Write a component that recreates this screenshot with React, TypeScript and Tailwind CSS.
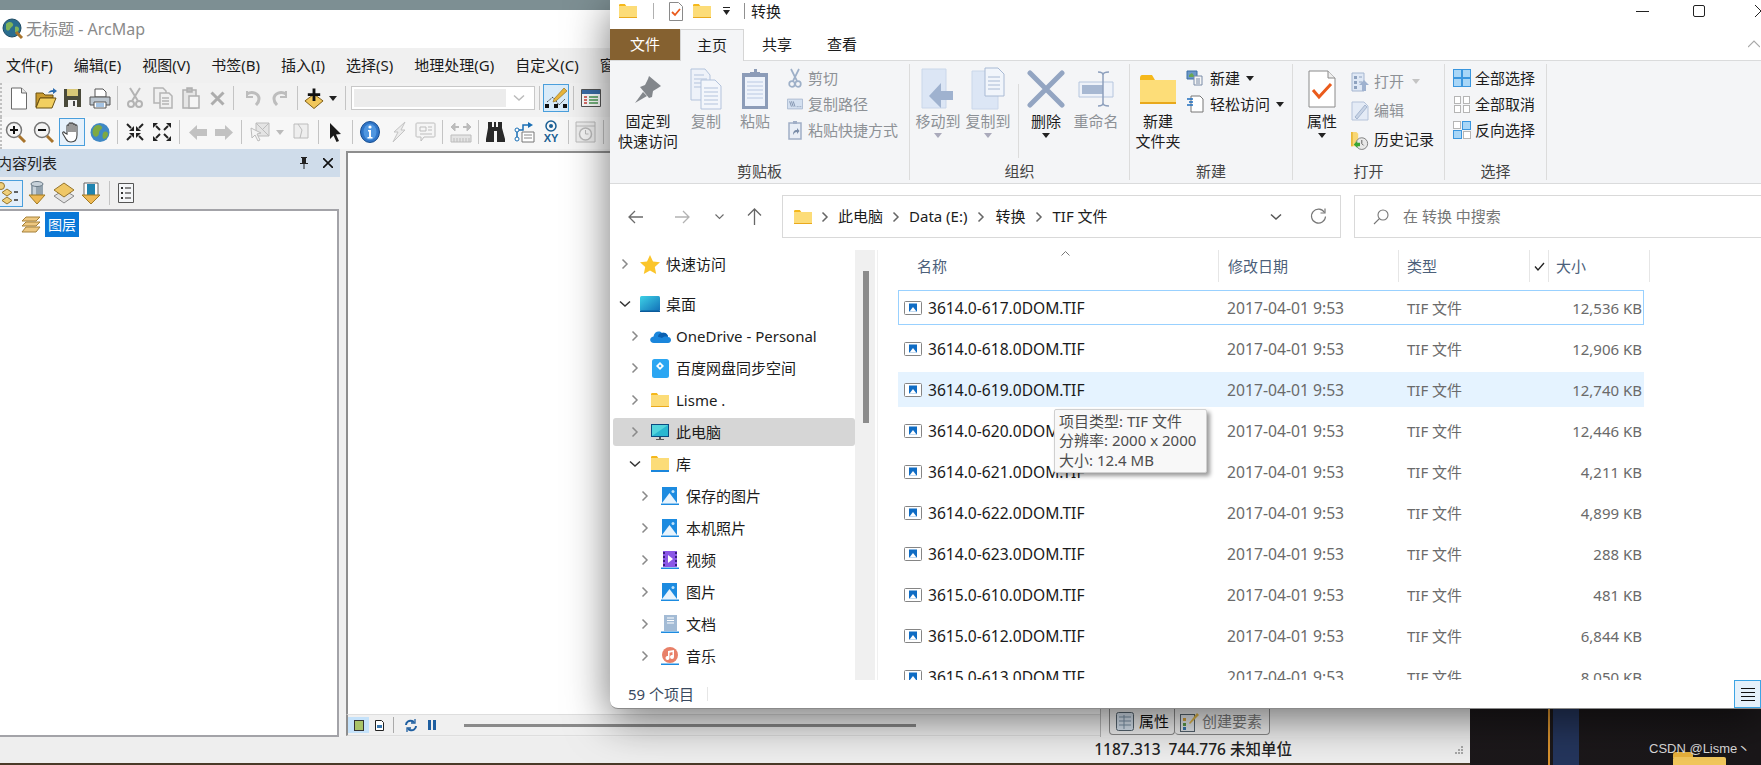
import React from "react";

type P = { className?: string };
type CellP = { w: string; children?: React.ReactNode };

const C = ({ w, children }: CellP) => (
  <div className={`${w} h-full shrink-0 flex items-center justify-center`}>{children}</div>
);
const TSep = () => <div className="w-px h-[24px] shrink-0 bg-[#c4c4c4]" />;

/* ---------- generic small glyphs ---------- */
const ChevR = ({ className = "stroke-[#8a8a8a]" }: P) => (
  <svg width="8" height="12" viewBox="0 0 8 12" fill="none" className={className} strokeWidth="1.5"><path d="M1.5 1.5 6 6l-4.500 4.500" /></svg>
);
const ChevD = ({ className = "stroke-[#444]" }: P) => (
  <svg width="12" height="8" viewBox="0 0 12 8" fill="none" className={className} strokeWidth="1.5"><path d="M1 1.500 6 6l5-4.500" /></svg>
);
const Caret = ({ className = "fill-[#222]" }: P) => (
  <svg width="8" height="5" viewBox="0 0 8 5" className={className}><path d="M0 0h8L4 5z" /></svg>
);

/* ---------- folders ---------- */
const Folder = ({ w = 18, h = 14 }: { w?: number; h?: number }) => (
  <svg width={w} height={h} viewBox="0 0 18 14">
    <path d="M0 1.500C0 .7.500 0 1.200 0h4.600l1.500 2H0z" fill="#f5b81c" />
    <path d="M0 2h18v11.200c0 .5-.3.8-.8.8H.8c-.5 0-.8-.3-.8-.8z" fill="#fcdc78" />
    <path d="M0 13h18v1H0z" fill="#eaa91c" />
  </svg>
);

/* ---------- arcmap toolbar icons ---------- */
const GlobeLens = () => (
  <svg width="22" height="22" viewBox="0 0 22 22">
    <circle cx="10" cy="10" r="9" fill="#2a6d8f" />
    <path d="M4 6c3-3 6-2 7 0s-2 3-3 5-3 2-4 0zM13 9c2-1 4 0 4 2s-2 4-4 3z" fill="#7fb35a" />
    <circle cx="10" cy="10" r="9" fill="none" stroke="#1d4a63" />
    <path d="M14 14l6 6" stroke="#a8742c" strokeWidth="3" />
  </svg>
);
const DocI = () => (
  <svg width="18" height="23" viewBox="0 0 18 23"><path d="M1.500 1h10l5 5v16h-15z" fill="#fff" stroke="#6a6a6a" /><path d="M11.500 1v5h5" fill="#e8e8e8" stroke="#6a6a6a" /></svg>
);
const OpenI = () => (
  <svg width="22" height="21" viewBox="0 0 22 21"><path d="M1 5h7l2 2h8v3H5L1 19z" fill="#c99a2e" stroke="#6a5010" /><path d="M1 20 5 10h16l-4 10z" fill="#f2cf60" stroke="#6a5010" /><path d="M13 5c1-2 3-3 5-3V0l4 3-4 3V4c-2 0-3 0-5 1z" fill="#2b6cb0" /></svg>
);
const SaveI = () => (
  <svg width="19" height="20" viewBox="0 0 19 20"><path d="M1 1h17v18H1z" fill="#4a4a3a" /><path d="M4 1h11v7H4z" fill="#d9c878" /><path d="M5 12h9v7H5z" fill="#f1f1f1" /><path d="M10 13h2v5h-2z" fill="#444" /></svg>
);
const PrintI = () => (
  <svg width="22" height="21" viewBox="0 0 22 21"><path d="M6 1h8l3 3v5H6z" fill="#fff" stroke="#555" /><path d="M1 9h20v8H1z" fill="#bcc6cf" stroke="#555" /><path d="M5 14h12v6H5z" fill="#fff" stroke="#555" /><path d="M7 16h8M7 18h8" stroke="#4a88c8" /></svg>
);
const CutG = () => (
  <svg width="18" height="22" viewBox="0 0 18 22" fill="none" stroke="#b4b4b4" strokeWidth="2"><path d="M4 1l8 13M14 1 6 14" /><circle cx="5" cy="17" r="3" /><circle cx="13" cy="17" r="3" /></svg>
);
const CopyG = () => (
  <svg width="20" height="22" viewBox="0 0 20 22" fill="#f0f0f0" stroke="#b4b4b4" strokeWidth="1.500"><path d="M1 1h9l3 3v12H1z" /><path d="M7 6h9l3 3v12H7z" /><path d="M9 11h7M9 14h7M9 17h7" /></svg>
);
const PasteG = () => (
  <svg width="18" height="22" viewBox="0 0 18 22" fill="#e6e6e6" stroke="#b0b0b0" strokeWidth="1.500"><path d="M1 3h13v18H1z" /><path d="M5 1h5v4H5z" fill="#bbb" /><path d="M7 9h10v12H7z" fill="#f5f5f5" /></svg>
);
const XG = () => (
  <svg width="15" height="15" viewBox="0 0 15 15" stroke="#adadad" strokeWidth="3"><path d="M1.500 1.500l12 12M13.500 1.500l-12 12" /></svg>
);
const UndoG = ({ flip }: { flip?: boolean }) => (
  <svg width="18" height="16" viewBox="0 0 18 16" fill="none" stroke="#bdbdbd" strokeWidth="3" className={flip ? "-scale-x-100" : ""}><path d="M3 4c5-3 12-1 12 5 0 2-1 4-3 6" /><path d="M3 1v6h6" strokeWidth="2" /></svg>
);
const AddI = () => (
  <svg width="21" height="23" viewBox="0 0 21 23"><path d="M10.500 7 20 14l-9.500 8L1 14z" fill="#f1c75b" stroke="#7a5a14" /><path d="M9 1h3v5h5v3h-5v5H9V9H4V6h5z" fill="#111" /></svg>
);
const EditorI = () => (
  <svg width="24" height="24" viewBox="0 0 24 24"><path d="M3 16 9 11l6 8 6-6" fill="none" stroke="#444" strokeDasharray="2 1" /><path d="M10 13 20 2l3 3-11 10-3 1z" fill="#e8b53c" stroke="#8a6412" strokeWidth=".6" /><g fill="#111"><rect x="1" y="18" width="4" height="4" /><rect x="10" y="18" width="4" height="4" /><rect x="19" y="18" width="4" height="4" /></g></svg>
);
const TableI = () => (
  <svg width="20" height="18" viewBox="0 0 20 18"><path d="M.5.500h19v17H.500z" fill="#fff" stroke="#555" /><path d="M1 1h18v4H1z" fill="#3b6ea8" /><path d="M3 8h3M3 11h3M3 14h3" stroke="#c9403a" strokeWidth="1.500" /><path d="M8 8h9M8 11h9M8 14h9" stroke="#4a9a54" strokeWidth="1.500" /></svg>
);
const ZoomI = ({ plus }: { plus?: boolean }) => (
  <svg width="22" height="23" viewBox="0 0 22 23"><circle cx="9" cy="9" r="7.500" fill="#f4f4f4" stroke="#777" strokeWidth="1.500" /><path d="M5 9h8" stroke="#111" strokeWidth="2" />{plus && <path d="M9 5v8" stroke="#111" strokeWidth="2" />}<path d="m14 15 6 6" stroke="#a8742c" strokeWidth="3" /></svg>
);
const HandI = () => (
  <svg width="20" height="23" viewBox="0 0 20 23" fill="#fff" stroke="#444" strokeWidth="1.100"><path d="M5 13V5c0-1.500 2-1.500 2 0V3c0-1.500 2-1.500 2 0v0c0-1.500 2-1.500 2 0v1c0-1.500 2-1.500 2 0v1c0-1.500 2-1.500 2 0v9c0 4-2 7-6 7-3 0-4-1-5-3l-3-5c-1-2 1-3 2-1z" /><path d="M7 5v6M9 3v8M11 4v7M13 5v6" /></svg>
);
const EarthI = () => (
  <svg width="20" height="21" viewBox="0 0 20 21"><circle cx="10" cy="10.500" r="9.500" fill="#3f88c5" /><path d="M5 4c3-2 6-1 7 1s-3 3-3 6-3 5-5 3-2-7 1-10zM14 10c2-1 4 0 4 2s-2 5-4 5-2-6 0-7z" fill="#7ea942" /></svg>
);
const ArrowsIn = () => (
  <svg width="18" height="18" viewBox="0 0 18 18" fill="#222" stroke="#222">
    <g><path d="M8 8H3l5-5z" stroke="none" /><path d="M1 1l4 4" strokeWidth="2" /></g>
    <g transform="translate(18 0) scale(-1 1)"><path d="M8 8H3l5-5z" stroke="none" /><path d="M1 1l4 4" strokeWidth="2" /></g>
    <g transform="translate(0 18) scale(1 -1)"><path d="M8 8H3l5-5z" stroke="none" /><path d="M1 1l4 4" strokeWidth="2" /></g>
    <g transform="translate(18 18) scale(-1 -1)"><path d="M8 8H3l5-5z" stroke="none" /><path d="M1 1l4 4" strokeWidth="2" /></g>
  </svg>
);
const ArrowsOut = () => (
  <svg width="18" height="18" viewBox="0 0 18 18" fill="#222" stroke="#222">
    <g><path d="M0 0h5L0 5z" stroke="none" /><path d="M3 3l4 4" strokeWidth="2" /></g>
    <g transform="translate(18 0) scale(-1 1)"><path d="M0 0h5L0 5z" stroke="none" /><path d="M3 3l4 4" strokeWidth="2" /></g>
    <g transform="translate(0 18) scale(1 -1)"><path d="M0 0h5L0 5z" stroke="none" /><path d="M3 3l4 4" strokeWidth="2" /></g>
    <g transform="translate(18 18) scale(-1 -1)"><path d="M0 0h5L0 5z" stroke="none" /><path d="M3 3l4 4" strokeWidth="2" /></g>
  </svg>
);
const BackG = ({ flip }: { flip?: boolean }) => (
  <svg width="18" height="15" viewBox="0 0 18 15" fill="#c2c2c2" className={flip ? "-scale-x-100" : ""}><path d="M8 0v4h10v7H8v4L0 7.500z" /></svg>
);
const SelG = () => (
  <svg width="20" height="20" viewBox="0 0 20 20" fill="#e4e4e4" stroke="#bcbcbc"><path d="M6 1h13v13H6z" /><path d="M6 1l13 13M19 1 12 8" fill="none" /><path d="M1 6l10 5-4 1 3 6-2 1-3-6-3 3z" fill="#f4f4f4" /></svg>
);
const ClearG = () => (
  <svg width="16" height="18" viewBox="0 0 16 18" fill="#eee" stroke="#bcbcbc"><path d="M1 1h14v14H1z" /><path d="M5 1l4 6-2 8" fill="none" /></svg>
);
const Pointer = () => (
  <svg width="13" height="19" viewBox="0 0 13 19" fill="#1a1a1a"><path d="M1 0l11 11-5 .5 3 6.500-2.500 1-3-6.500L1 16z" /></svg>
);
const InfoI = () => (
  <svg width="20" height="22" viewBox="0 0 20 22"><ellipse cx="10" cy="11" rx="9.500" ry="10.500" fill="#2f75c8" stroke="#174d8f" /><ellipse cx="10" cy="11" rx="6.500" ry="8" fill="#4f96e0" /><circle cx="10" cy="6" r="1.600" fill="#fff" /><path d="M8 9h3v7h1.500v1.500h-5V16H9v-5.500H8z" fill="#fff" /></svg>
);
const FlashG = () => (
  <svg width="16" height="22" viewBox="0 0 16 22" fill="#ebebeb" stroke="#c4c4c4"><path d="M14 1 3 11h4L2 21l12-12h-4z" /></svg>
);
const HtmlG = () => (
  <svg width="21" height="20" viewBox="0 0 21 20" fill="#f5f5f5" stroke="#bdbdbd"><path d="M2 1h17c1 0 1 1 1 1v12s0 1-1 1H9l-3 4v-4H2c-1 0-1-1-1-1V2s0-1 1-1z" /><path d="M5 5h6v4H5zM13 5h4M13 8h4M5 12h12" /></svg>
);
const MeasG = () => (
  <svg width="22" height="22" viewBox="0 0 22 22" fill="none" stroke="#bcbcbc"><path d="M1 14h20v7H1z" fill="#e4e4e4" /><path d="M4 17v4M7 17v4M10 17v4M13 17v4M16 17v4M19 17v4" /><path d="M1 6h8M21 6h-8" strokeWidth="2" /><path d="M1 6l4-4v8zM21 6l-4-4v8z" fill="#bcbcbc" /></svg>
);
const Binoc = () => (
  <svg width="20" height="22" viewBox="0 0 20 22" fill="#2a2a2a"><path d="M3 1h4v5h2V1h2v5h2V1h4v6l3 11v3h-8V10H9v11H1v-3L3 7z" /></svg>
);
const RouteI = () => (
  <svg width="21" height="22" viewBox="0 0 21 22" fill="none"><path d="M3 17V9h6V4h5" stroke="#1a6fb5" strokeWidth="1.500" /><path d="M14 1l5 3-5 3z" fill="#1a6fb5" /><path d="M8 11h12v10H8z" fill="#fff" stroke="#777" /><path d="M10 14h8M10 17h8" stroke="#888" /><circle cx="3" cy="9" r="2" fill="#fff" stroke="#1a6fb5" /><circle cx="3" cy="18" r="2" fill="#fff" stroke="#1a6fb5" /></svg>
);
const XYI = () => (
  <div className="flex flex-col items-center leading-none">
    <svg width="12" height="12" viewBox="0 0 12 12" fill="none"><circle cx="6" cy="6" r="5" stroke="#1a5f94" strokeWidth="1.500" /><circle cx="6" cy="6" r="2" fill="#1a5f94" /></svg>
    <span className="text-[11px] font-bold text-[#1a5f94] font-['Liberation_Sans',sans-serif] mt-px">XY</span>
  </div>
);
const TimeG = () => (
  <svg width="21" height="22" viewBox="0 0 21 22" fill="none" stroke="#bcbcbc"><path d="M1 1h19v20H1z" fill="#efefef" /><path d="M1 5h19" /><circle cx="10.500" cy="13" r="6" fill="#f8f8f8" strokeWidth="1.500" /><path d="M10.500 9v4h3" /></svg>
);
const TreeI = () => (
  <svg width="22" height="24" viewBox="0 0 22 24"><circle cx="4" cy="5" r="3.500" fill="#efd07c" stroke="#96752c" /><path d="M10 8l5 3.500-5 3.500-5-3.500z" fill="#efd07c" stroke="#96752c" /><path d="M10 16l5 3.500-5 3.500-5-3.500z" fill="#efd07c" stroke="#96752c" /><path d="M17 11h4M17 19h4" stroke="#333" strokeWidth="1.500" /></svg>
);
const DbI = () => (
  <svg width="18" height="24" viewBox="0 0 18 24"><path d="M3 3h12v12H3z" fill="#94a3ae" /><path d="M5 4h3v11H5z" fill="#c8d2da" /><ellipse cx="9" cy="3" rx="6" ry="2.500" fill="#c8d2da" stroke="#6a7a86" /><path d="M1 14h16l-8 9z" fill="#eeb955" stroke="#a07a22" /></svg>
);
const StackI = () => (
  <svg width="22" height="24" viewBox="0 0 22 24"><path d="M11 9l10 6-10 7-10-7z" fill="#e2e2e2" stroke="#888" /><path d="M11 2l10 7-10 7L1 9z" fill="#efc766" stroke="#96752c" /></svg>
);
const SelStack = () => (
  <svg width="20" height="24" viewBox="0 0 20 24"><path d="M3 2h14v13H3z" fill="#fff" stroke="#666" /><path d="M6 3h8v11H6z" fill="#1f84b0" /><path d="M1 14h18l-9 9z" fill="#eeb955" stroke="#a07a22" /></svg>
);
const OptsI = () => (
  <svg width="16" height="20" viewBox="0 0 16 20"><path d="M.5.500h15v19H.500z" fill="#f4f6f8" stroke="#555" /><path d="M3 5h2M3 10h2M3 15h2" stroke="#333" strokeWidth="2" /><path d="M7 5h6M7 10h6M7 15h6" stroke="#666" strokeWidth="1.500" /></svg>
);
const Layers = () => (
  <svg width="20" height="18" viewBox="0 0 20 18" fill="#eec881" stroke="#a5813a"><path d="M5 1h14l-4 4H1zM5 6h14l-4 4H1zM5 11h14l-4 5H1z" /></svg>
);

/* ---------- ribbon icons ---------- */
const PinBig = () => (
  <svg width="28" height="32" viewBox="0 0 28 32"><path d="M15 3l12 10-3 2-5 3-1 6-3 1-9-11 5-2 3-6z" fill="#83878c" /><path d="M9 19 1 30l12-7z" fill="#83878c" /></svg>
);
const CopyBig = () => (
  <svg width="32" height="42" viewBox="0 0 32 42" fill="#eef2f9" stroke="#b3c3dc"><path d="M1 1h14l5 6v25H1z" /><path d="M4 7h10M4 11h13M4 15h13M4 19h13" /><path d="M11 12h14l6 6v23H11z" fill="#f3f6fb" /><path d="M14 20h14M14 24h14M14 28h14M14 32h14M14 36h14" /></svg>
);
const PasteBig = () => (
  <svg width="28" height="42" viewBox="0 0 28 42"><path d="M1 5h26v36H1z" fill="#8c9cb8" /><path d="M4 9h20v29H4z" fill="#eef3fb" /><path d="M6 14h16M6 18h16M6 22h16M6 26h16M6 30h16" stroke="#b9c8e2" /><path d="M9 4h4V1h3v3h3v5H9z" fill="#8c9cb8" /></svg>
);
const CutSm = () => (
  <svg width="14" height="20" viewBox="0 0 14 20" fill="none" stroke="#9eb0c8" strokeWidth="1.700"><path d="M3 1l6 12M11 1 5 13" /><circle cx="4" cy="16" r="2.800" /><circle cx="10" cy="16" r="2.800" /></svg>
);
const PathSm = () => (
  <svg width="18" height="12" viewBox="0 0 18 12"><path d="M.5.500h17v11H.500z" fill="#d4e0f0" stroke="#a8b8d0" /><path d="M3 3l2 6M5 3l2 6M7 3l2 6" stroke="#7a8ca8" /><path d="M11 9h1M13 9h1M15 9h1" stroke="#7a8ca8" /></svg>
);
const ShortSm = () => (
  <svg width="14" height="20" viewBox="0 0 14 20"><path d="M1 3h12v16H1z" fill="#e9eef6" stroke="#a0aec6" strokeWidth="1.500" /><path d="M5 1h4v3H5z" fill="#a0aec6" /><path d="M5 15c0-3 1-5 4-5V8l2.500 3L9 14v-2c-2 0-3 1-4 3z" fill="#7a8ca8" /></svg>
);
const MoveBig = () => (
  <svg width="34" height="42" viewBox="0 0 34 42"><path d="M1 1h24v39H1z" fill="#dce6f5" stroke="#cad7ea" /><path d="M32 23H20v-8L8 28l12 12v-8h12z" fill="#9fb2cf" /></svg>
);
const CopyTo = () => (
  <svg width="34" height="44" viewBox="0 0 34 44"><path d="M1 4h26v38H1z" fill="#dce6f5" stroke="#cad7ea" /><path d="M14 1h13l6 6v22H14z" fill="#f1f5fb" stroke="#a9bad4" /><path d="M17 10h12M17 14h12M17 18h12M17 22h12" stroke="#a9bad4" /></svg>
);
const XBig = () => (
  <svg width="38" height="38" viewBox="0 0 38 38" stroke="#93a5c2" strokeWidth="5" strokeLinecap="round"><path d="M3 3l32 32M35 3 3 35" /></svg>
);
const Rename = () => (
  <svg width="36" height="36" viewBox="0 0 36 36"><path d="M1 11h34v15H1z" fill="#eef2f9" stroke="#b6c6de" /><path d="M4 14h21v9H4z" fill="#a7b8d2" /><path d="M20 1c3 0 5 1 5 3v28c0 2-2 3-5 3M31 1c-3 0-6 1-6 3M31 35c-3 0-6-1-6-3" fill="none" stroke="#8ea0bd" strokeWidth="1.500" /></svg>
);
const FolderBig = () => (
  <svg width="36" height="29" viewBox="0 0 36 29"><path d="M0 3c0-2 1-3 2-3h10l3 5H0z" fill="#f5b81c" /><path d="M0 5h36v22c0 1-1 2-2 2H2c-1 0-2-1-2-2z" fill="#fddd78" /><path d="M0 27h36v2H0z" fill="#e8a81c" /></svg>
);
const NewItem = () => (
  <svg width="18" height="16" viewBox="0 0 18 16"><path d="M1 1h10v8H1z" fill="#6c98c8" stroke="#3a6fa5" /><path d="M3 5l3-2 3 4H3z" fill="#6aa84f" /><path d="M8 6h8v9H8z" fill="#f5f5f5" stroke="#7a8ca8" /><path d="M10 9h4M10 11h4M10 13h4" stroke="#7a8ca8" /></svg>
);
const EasyAcc = () => (
  <svg width="18" height="18" viewBox="0 0 18 18"><path d="M5 1h9l3 3v13H5z" fill="#fff" stroke="#777" /><path d="M1 4h6M3 7h4M1 10h6" stroke="#1f6fc0" strokeWidth="1.300" /></svg>
);
const PropBig = () => (
  <svg width="28" height="38" viewBox="0 0 28 38"><path d="M1 1h19l7 7v29H1z" fill="#fff" stroke="#8a8a8a" /><path d="M20 1v7h7" fill="#eee" stroke="#8a8a8a" /><path d="M5 20l6 7 12-13" fill="none" stroke="#ea5b1c" strokeWidth="3" /></svg>
);
const OpenSm = () => (
  <svg width="18" height="20" viewBox="0 0 18 20"><path d="M1 1h12v18H1z" fill="#dfe8f5" stroke="#a5b6d0" /><path d="M3 4h3v3H3zM3 9h3v3H3zM3 14h3v3H3z" fill="#8ea2bf" /><path d="M8 5h3M8 10h3" stroke="#8ea2bf" /><path d="M13 8l5 5h-3v6h-4v-6H8z" fill="#9fb2cf" /></svg>
);
const EditSm = () => (
  <svg width="18" height="20" viewBox="0 0 18 20"><path d="M1 1h12l4 4v14H1z" fill="#e4ebf6" stroke="#b5c3da" /><path d="M4 16 14 4l2 2L6 18z" fill="#c8d4e6" stroke="#a5b6d0" /></svg>
);
const HistSm = () => (
  <svg width="20" height="22" viewBox="0 0 20 22"><path d="M0 2h6l2 2v14H0z" fill="#f8d775" /><path d="M0 2h2v16H0z" fill="#e9b93a" /><circle cx="12" cy="15" r="6.500" fill="#e8e8e8" stroke="#777" /><path d="M12 11v4l2 2" stroke="#555" fill="none" /><path d="M3 16l4-4v2h3v4H7v2z" fill="#3aa635" /></svg>
);
const SelAll = () => (
  <svg width="18" height="18" viewBox="0 0 18 18" fill="#a8d6f7" stroke="#3a96de"><rect x=".5" y=".5" width="8" height="8" /><rect x="9.500" y=".5" width="8" height="8" /><rect x=".5" y="9.500" width="8" height="8" /><rect x="9.500" y="9.500" width="8" height="8" /></svg>
);
const SelNone = () => (
  <svg width="16" height="17" viewBox="0 0 16 17" fill="#fff" stroke="#b5b5b5"><rect x=".5" y=".5" width="6" height="7" /><rect x="9.500" y=".5" width="6" height="7" /><rect x=".5" y="9.500" width="6" height="7" /><rect x="9.500" y="9.500" width="6" height="7" /></svg>
);
const SelInv = () => (
  <svg width="18" height="18" viewBox="0 0 18 18"><rect x=".5" y=".5" width="7" height="7" fill="#fff" stroke="#b5b5b5" /><rect x="9.500" y=".5" width="8" height="8" fill="#a8d6f7" stroke="#3a96de" /><rect x=".5" y="9.500" width="8" height="8" fill="#a8d6f7" stroke="#3a96de" /><rect x="10.500" y="10.500" width="7" height="7" fill="#fff" stroke="#b5b5b5" /></svg>
);

/* ---------- sidebar icons ---------- */
const Star = () => (
  <svg width="20" height="19" viewBox="0 0 20 19" fill="#fbc52b"><path d="M10 0l3 6.500 7 .8-5.200 4.700L16.200 19 10 15.500 3.800 19l1.400-7L0 7.300l7-.8z" /></svg>
);
const Desk = () => (
  <svg width="20" height="16" viewBox="0 0 20 16"><defs><linearGradient id="dg" x1="0" y1="0" x2="1" y2="1"><stop offset="0" stopColor="#3ed2e6" /><stop offset="1" stopColor="#1270b8" /></linearGradient></defs><rect width="20" height="15" rx="1.500" fill="url(#dg)" /><rect y="14.500" width="20" height="1.500" fill="#0a5a9a" /></svg>
);
const Cloud = () => (
  <svg width="21" height="14" viewBox="0 0 21 14"><path d="M4 14c-5 0-5-6-.5-6.500C4 3 9 1 12 4c3-1 6 1 6 4 4 0 4 6 0 6z" fill="#1a86dc" /><path d="M12 4c3-1 6 1 6 4-3-1-5 0-6 1-2-1-3-1-4-1 0-3 2-4 4-4z" fill="#0a5fb0" /></svg>
);
const Baidu = () => (
  <svg width="17" height="19" viewBox="0 0 17 19"><rect width="17" height="19" rx="2.500" fill="#2ba6f2" /><path d="M8 3l4 4-4 4-4-4zM8 5.500 6.500 7 8 8.500 9.500 7z" fill="#fff" fillRule="evenodd" /></svg>
);
const Monitor = () => (
  <svg width="18" height="16" viewBox="0 0 18 16"><rect x=".5" y=".5" width="17" height="12" fill="#2ab7d0" stroke="#0b4a80" /><path d="M1 1h16L1 12z" fill="#52d4dc" /><path d="M8 13h2v2H8z" fill="#555" /><path d="M5 15h8v1H5z" fill="#555" /></svg>
);
const LibF = () => (
  <svg width="18" height="16" viewBox="0 0 18 16"><path d="M0 1.500C0 .7.500 0 1.200 0h4.600l1.500 2H0z" fill="#f5b81c" /><path d="M0 2h18v12H0z" fill="#fcdc78" /><path d="M0 14h18v2H0z" fill="#1a86dc" /></svg>
);
const Pic = () => (
  <svg width="18" height="18" viewBox="0 0 18 18"><path d="M1 0h15v16H1z" fill="#1c8be0" /><path d="M1 16 8.500 6 16 16z" fill="#e8f4fd" /><path d="M0 16.500h18V18H0z" fill="#1c8be0" /><circle cx="12" cy="4.500" r="1.500" fill="#bfe3fb" /></svg>
);
const Vid = () => (
  <svg width="18" height="18" viewBox="0 0 18 18"><path d="M2 0h14v16H2z" fill="#8a57e6" /><path d="M2 1h2v2H2zM2 5h2v2H2zM2 9h2v2H2zM2 13h2v2H2zM14 1h2v2h-2zM14 5h2v2h-2zM14 9h2v2h-2zM14 13h2v2h-2z" fill="#3a1f80" /><path d="M7 4l5 4-5 4z" fill="#fff" /><path d="M0 16.500h18V18H0z" fill="#1c8be0" /></svg>
);
const DocBlue = () => (
  <svg width="18" height="18" viewBox="0 0 18 18"><path d="M3 0h13v16H3z" fill="#a3bbd5" /><path d="M6 3h7M6 5.500h7M6 8h7" stroke="#fff" /><path d="M0 16.500h18V18H0z" fill="#1c8be0" /></svg>
);
const Music = () => (
  <svg width="18" height="18" viewBox="0 0 18 18"><circle cx="9" cy="8" r="8" fill="#e88068" /><path d="M7 4l6-1v7a2 2 0 1 1-1.500-2V5L8.500 5.700V11a2 2 0 1 1-1.500-2z" fill="#fff" /><path d="M0 16.500h18V18H0z" fill="#1c8be0" /></svg>
);
const Tif = () => (
  <svg width="18" height="14" viewBox="0 0 18 14"><rect x=".5" y=".5" width="17" height="13" rx="1" fill="#fff" stroke="#858585" /><rect x="5" y="2.500" width="8" height="8" fill="#0f6cc4" /><path d="M5.500 10.500 9 6l3.500 4.500z" fill="#fff" /></svg>
);

/* ---------- ribbon parts ---------- */
const RGroup = ({ w, label, children }: { w: string; label: string; children: React.ReactNode }) => (
  <div className={`${w} shrink-0 my-[3px] flex flex-col border-r border-[#dcdcdc]`}>
    <div className="h-[99px] flex pt-px">{children}</div>
    <div className="flex-1 flex items-center justify-center text-[15px] leading-none text-[#444]">{label}</div>
  </div>
);
const Big = ({ w, icon, lines, muted, arrow }: { w: string; icon: React.ReactNode; lines: string[]; muted?: boolean; arrow?: string }) => (
  <div className={`${w} shrink-0 flex flex-col items-center ${muted ? "text-[#8d9196]" : "text-[#1c1c1c]"}`}>
    <div className="h-[46px] pt-[2px] box-border flex items-center justify-center">{icon}</div>
    {lines.map((l) => (
      <div key={l} className="h-[20px] leading-[20px] text-[15px] whitespace-nowrap">{l}</div>
    ))}
    {arrow && <Caret className={`${arrow} mt-[2px]`} />}
  </div>
);
const Small = ({ icon, label, muted, after, cell, row, gap }: { icon: React.ReactNode; label: string; muted?: boolean; after?: React.ReactNode; cell: string; row: string; gap: string }) => (
  <div className={`${row} flex items-center whitespace-nowrap text-[15px] leading-none ${muted ? "text-[#8d9196]" : "text-[#1c1c1c]"}`}>
    <div className={`${cell} ${gap} flex items-center justify-center shrink-0`}>{icon}</div>
    {label}
    {after}
  </div>
);

/* ---------- sidebar ---------- */
const NavRow = ({ lv, icon, label, open, active, top, noChev }: { lv: string; icon: React.ReactNode; label: string; open?: boolean; active?: boolean; top?: string; noChev?: boolean }) => (
  <div className={`${lv} ${top ?? ""} ${active ? "bg-[#d6d6d6]" : ""} h-[28px] shrink-0 rounded-[3px] flex items-center text-[15px] text-[#1c1c1c] whitespace-nowrap`}>
    <div className="w-[20px] flex justify-center shrink-0">{noChev ? null : open ? <ChevD className="stroke-[#333]" /> : <ChevR />}</div>
    <div className="w-[30px] flex justify-center shrink-0">{icon}</div>
    <span className="ml-px">{label}</span>
  </div>
);

const files: [string, string][] = [
  ["3614.0-617.0DOM.TIF", "12,536 KB"],
  ["3614.0-618.0DOM.TIF", "12,906 KB"],
  ["3614.0-619.0DOM.TIF", "12,740 KB"],
  ["3614.0-620.0DOM.TIF", "12,446 KB"],
  ["3614.0-621.0DOM.TIF", "4,211 KB"],
  ["3614.0-622.0DOM.TIF", "4,899 KB"],
  ["3614.0-623.0DOM.TIF", "288 KB"],
  ["3615.0-610.0DOM.TIF", "481 KB"],
  ["3615.0-612.0DOM.TIF", "6,844 KB"],
  ["3615.0-613.0DOM.TIF", "8,050 KB"],
];

const menu = ["文件(F)", "编辑(E)", "视图(V)", "书签(B)", "插入(I)", "选择(S)", "地理处理(G)", "自定义(C)", "窗口(W)"];

const ArcMap = () => (
  <div className="w-[1470px] h-[753px] flex flex-col bg-[#f0f0f0] overflow-hidden">
    <div className="h-[38px] shrink-0 bg-white flex items-center pl-[2px] text-[16px] text-[#8a8a8a]">
      <GlobeLens />
      <span className="ml-[2px]">无标题 - ArcMap</span>
    </div>
    <div className="h-[35px] shrink-0 bg-[#f0f0f0] flex items-center pl-[6px] pb-px gap-[21px] text-[15px] text-[#1a1a1a] whitespace-nowrap">
      {menu.map((m) => <span key={m}>{m}</span>)}
    </div>
    <div className="h-[34px] shrink-0 bg-[#f2f2f2] flex items-center pl-[3px] pb-[4px] border-l-2 border-dotted border-[#c0c0c0]">
      <C w="w-[27px]"><DocI /></C><C w="w-[27px]"><OpenI /></C><C w="w-[27px]"><SaveI /></C><C w="w-[27px]"><PrintI /></C>
      <C w="w-[8px]"><TSep /></C>
      <C w="w-[28px]"><CutG /></C><C w="w-[28px]"><CopyG /></C><C w="w-[27px]"><PasteG /></C><C w="w-[26px]"><XG /></C>
      <C w="w-[6px]"><TSep /></C>
      <C w="w-[34px]"><UndoG /></C><C w="w-[20px]"><UndoG flip /></C>
      <C w="w-[14px]"><TSep /></C>
      <C w="w-[20px]"><AddI /></C><C w="w-[18px]"><Caret /></C>
      <C w="w-[6px]"><TSep /></C>
      <div className="ml-[3px] w-[184px] h-[24px] shrink-0 border border-[#c8c8c8] bg-white p-[2px] flex items-center">
        <div className="flex-1 h-full bg-[#ececec]" />
        <div className="w-[26px] flex justify-center"><ChevD className="stroke-[#bbb]" /></div>
      </div>
      <C w="w-[8px]"><TSep /></C>
      <div className="w-[26px] h-[28px] shrink-0 border border-[#4a9fdc] bg-[#d9ebf9] flex items-center justify-center"><EditorI /></div>
      <C w="w-[8px]"><TSep /></C>
      <C w="w-[28px]"><TableI /></C>
    </div>
    <div className="h-[32px] shrink-0 bg-[#f7f7f7] flex items-center pl-[1px] pb-[2px] border-l-2 border-dotted border-[#c0c0c0]">
      <C w="w-[26px]"><ZoomI plus /></C><C w="w-[30px]"><ZoomI /></C>
      <div className="w-[26px] h-[28px] shrink-0 border border-[#4a9fdc] bg-[#e6f1fb] flex items-center justify-center"><HandI /></div>
      <C w="w-[30px]"><EarthI /></C>
      <C w="w-[4px]"><TSep /></C>
      <C w="w-[32px]"><ArrowsIn /></C><C w="w-[22px]"><ArrowsOut /></C>
      <C w="w-[12px]"><TSep /></C>
      <C w="w-[26px]"><BackG /></C><C w="w-[26px]"><BackG flip /></C>
      <C w="w-[8px]"><TSep /></C>
      <C w="w-[30px]"><SelG /></C><C w="w-[10px]"><Caret className="fill-[#bbb]" /></C><C w="w-[32px]"><ClearG /></C>
      <C w="w-[2px]"><TSep /></C>
      <C w="w-[32px]"><Pointer /></C>
      <C w="w-[2px]"><TSep /></C>
      <C w="w-[34px]"><InfoI /></C><C w="w-[24px]"><FlashG /></C><C w="w-[28px]"><HtmlG /></C>
      <C w="w-[6px]"><TSep /></C>
      <C w="w-[32px]"><MeasG /></C>
      <C w="w-[2px]"><TSep /></C>
      <C w="w-[32px]"><Binoc /></C><C w="w-[26px]"><RouteI /></C><C w="w-[28px]"><XYI /></C>
      <C w="w-[6px]"><TSep /></C>
      <C w="w-[28px]"><TimeG /></C>
      <C w="w-[8px]"><TSep /></C>
    </div>
    <div className="flex-1 flex min-h-0">
      <div className="w-[346px] shrink-0 flex flex-col">
        <div className="w-[340px] h-[28px] shrink-0 bg-[#cfdcea] flex items-center text-[15px] text-[#222] overflow-hidden">
          <span className="-ml-[3px] flex-1">内容列表</span>
          <svg width="10" height="12" viewBox="0 0 10 12" className="mr-[14px]" fill="#222"><path d="M2 0h6v1H7v5h2v1H5.500v5h-1V7H1V6h2V1H2z" /></svg>
          <svg width="10" height="10" viewBox="0 0 10 10" className="mr-[7px]" stroke="#111" strokeWidth="1.600"><path d="M0 0l10 10M10 0 0 10" /></svg>
        </div>
        <div className="w-[340px] h-[32px] shrink-0 flex items-center">
          <div className="w-[23px] h-[27px] shrink-0 border border-[#4a9fdc] border-l-0 bg-[#e2eefa] flex items-center justify-start overflow-hidden"><div className="-ml-[3px] flex"><TreeI /></div></div>
          <C w="w-[28px]"><DbI /></C><C w="w-[26px]"><StackI /></C><C w="w-[28px]"><SelStack /></C>
          <C w="w-[8px]"><TSep /></C>
          <C w="w-[26px]"><OptsI /></C>
        </div>
        <div className="w-[339px] flex-1 bg-white border-t-2 border-r-2 border-b-2 border-[#a3a3a8] pl-[21px] pt-[1px]">
          <div className="flex items-center h-[25px]">
            <Layers />
            <span className="ml-[4px] h-[25px] w-[34px] bg-[#0a78d7] text-white text-[14px] leading-[25px] text-center">图层</span>
          </div>
        </div>
      </div>
      <div className="w-[754px] shrink-0 flex flex-col pt-[2px]">
        <div className="h-[563px] shrink-0 bg-white border-l-2 border-t-2 border-[#8e8e8e]" />
        <div className="h-[22px] shrink-0 bg-[#f0f0f0] border-t border-b border-[#dedede] border-l-2 border-l-[#8e8e8e] flex items-center">
          <div className="w-[21px] h-[16px] bg-[#c5e2fa] flex items-center justify-center">
            <svg width="10" height="11" viewBox="0 0 10 11"><rect width="10" height="11" fill="#333" /><rect x="1" y="1" width="8" height="9" fill="#a9c468" /></svg>
          </div>
          <C w="w-[21px]"><svg width="9" height="11" viewBox="0 0 9 11"><path d="M.5.500h6l2 2v8h-8z" fill="#fff" stroke="#222" /><rect x="2" y="5" width="5" height="3" fill="#3a78b0" /></svg></C>
          <C w="w-[7px]"><div className="w-px h-[16px] bg-[#aaa]" /></C>
          <C w="w-[27px]"><svg width="12" height="13" viewBox="0 0 12 13" fill="none" stroke="#1f5fa0" strokeWidth="2"><path d="M1 6c0-3 3-5 6-4l2 1M11 7c0 3-3 5-6 4l-2-1" /><path d="M10 0v4H6M2 13V9h4" strokeWidth="1.300" /></svg></C>
          <C w="w-[15px]"><svg width="8" height="10" viewBox="0 0 8 10" fill="#1f5fa0"><rect width="3" height="10" /><rect x="5" width="3" height="10" /></svg></C>
          <div className="ml-[25px] w-[452px] h-[3px] bg-[#8a8a8a]" />
        </div>
      </div>
      <div className="flex-1 border-l border-[#b5b5b5] flex flex-col justify-end pb-[2px] pl-[8px]">
        <div className="h-[26px] flex text-[15px]">
          <div className="w-[66px] border border-t-0 border-[#8c8c8c] rounded-b-[4px] flex items-center pl-[6px] gap-[5px] text-[#111]">
            <svg width="18" height="19" viewBox="0 0 18 19"><rect x=".5" y=".5" width="17" height="18" rx="2" fill="#d8e4f0" stroke="#56646f" /><path d="M3 5h12M3 9h12M3 13h12M8 3v14" stroke="#7d93a8" /></svg>
            属性
          </div>
          <div className="w-[95px] border border-l-0 border-t-0 border-[#8c8c8c] rounded-b-[4px] flex items-center pl-[5px] gap-[3px] text-[#7a7a7a] whitespace-nowrap">
            <svg width="19" height="20" viewBox="0 0 19 20"><rect x=".5" y="2.500" width="14" height="17" fill="#e6eaee" stroke="#56646f" /><path d="M3 6h3v3H3z" fill="#d9a13a" /><path d="M3 11h3v3H3z" fill="#5a9a4a" /><path d="M3 15h3v3H3z" fill="#3a78b0" /><path d="M9 11 17 1l2 2-9 9z" fill="#e2b84a" /></svg>
            创建要素
          </div>
        </div>
      </div>
    </div>
    <div className="h-[26px] shrink-0 bg-[#eeeeee] flex items-center justify-end pr-[6px] text-[15.500px] font-medium text-[#222] whitespace-nowrap">
      <span className="mr-[162px]">1187.313&nbsp;&nbsp;744.776 未知单位</span>
      <svg width="10" height="10" viewBox="0 0 10 10" fill="#a8a8a8"><path d="M7 1h2v2H7zM4 4h2v2H4zM7 4h2v2H7zM1 7h2v2H1zM4 7h2v2H4zM7 7h2v2H7z" /></svg>
    </div>
  </div>
);

const Explorer = () => (
  <div className="absolute left-[610px] top-0 w-[1151px] h-[709px] bg-white rounded-bl-[8px] border-b border-[#8a8a8a] shadow-[0_10px_44px_rgba(0,0,0,0.55)] flex flex-col overflow-hidden text-[#1c1c1c]">
    {/* title */}
    <div className="h-[29px] shrink-0 flex items-center pb-[7px]">
      <div className="ml-[9px] w-[18px] flex"><Folder /></div>
      <div className="ml-[16px] w-px h-[16px] bg-[#b0b0b0]" />
      <div className="ml-[15px]"><svg width="14" height="19" viewBox="0 0 14 19"><path d="M.5.500h9l4 4v14H.500z" fill="#fff" stroke="#8a8a8a" /><path d="M3 10l3 3 5-6" fill="none" stroke="#ea5b1c" strokeWidth="1.800" /></svg></div>
      <div className="ml-[10px] flex"><Folder /></div>
      <div className="ml-[12px]"><svg width="7" height="8" viewBox="0 0 7 8" fill="#222"><path d="M0 0h7v1H0zM0 3h7L3.500 8z" /></svg></div>
      <div className="ml-[14px] w-px h-[16px] bg-[#909090]" />
      <span className="ml-[6px] text-[15px]">转换</span>
      <div className="flex-1" />
      <div className="w-[13px] h-px bg-[#222] mr-[44px]" />
      <div className="w-[12px] h-[12px] border border-[#222] rounded-[2px] mr-[50px]" />
      <svg width="6" height="12" viewBox="0 0 6 12" stroke="#222"><path d="M0 0l6 6M0 12l6-6" /></svg>
    </div>
    {/* tabs */}
    <div className="h-[31px] shrink-0 flex text-[15px] relative z-10">
      <div className="w-[70px] bg-[#856130] text-white flex items-center justify-center">文件</div>
      <div className="w-[64px] h-[32px] bg-[#f4f5f7] border border-b-0 border-[#d5d5d5] flex items-center justify-center">主页</div>
      <div className="w-[66px] flex items-center justify-center">共享</div>
      <div className="w-[64px] flex items-center justify-center">查看</div>
      <div className="flex-1 flex items-center justify-end pr-[1px] pb-[2px]"><svg width="12" height="8" viewBox="0 0 12 8" fill="none" stroke="#a8a8a8" strokeWidth="1.200"><path d="M0 7l6-6 6 6" /></svg></div>
    </div>
    {/* ribbon */}
    <div className="h-[124px] shrink-0 bg-[#f4f5f7] border-y border-[#dadbdc] flex">
      <RGroup w="w-[300px]" label="剪贴板">
        <Big w="w-[76px]" icon={<PinBig />} lines={["固定到", "快速访问"]} />
        <Big w="w-[40px]" muted icon={<CopyBig />} lines={["复制"]} />
        <Big w="w-[58px]" muted icon={<PasteBig />} lines={["粘贴"]} />
        <div className="pl-[3px]">
          <Small muted row="h-[26px]" cell="w-[16px]" gap="mr-[5px]" icon={<CutSm />} label="剪切" />
          <Small muted row="h-[26px]" cell="w-[16px]" gap="mr-[5px]" icon={<PathSm />} label="复制路径" />
          <Small muted row="h-[26px]" cell="w-[16px]" gap="mr-[5px]" icon={<ShortSm />} label="粘贴快捷方式" />
        </div>
      </RGroup>
      <RGroup w="w-[220px]" label="组织">
        <div className="w-[3px] shrink-0" />
        <Big w="w-[50px]" muted icon={<MoveBig />} lines={["移动到"]} arrow="fill-[#aab]" />
        <Big w="w-[50px]" muted icon={<CopyTo />} lines={["复制到"]} arrow="fill-[#aab]" />
        <div className="w-[6px] shrink-0 flex justify-end pt-[19px] pb-[5px]"><div className="w-px bg-[#dcdcdc]" /></div>
        <Big w="w-[54px]" icon={<XBig />} lines={["删除"]} arrow="fill-[#222]" />
        <Big w="w-[46px]" muted icon={<Rename />} lines={["重命名"]} />
      </RGroup>
      <RGroup w="w-[163px]" label="新建">
        <Big w="w-[56px]" icon={<FolderBig />} lines={["新建", "文件夹"]} />
        <div>
          <Small row="h-[26px]" cell="w-[18px]" gap="mr-[6px]" icon={<NewItem />} label="新建" after={<Caret className="fill-[#222] ml-[6px]" />} />
          <Small row="h-[26px]" cell="w-[18px]" gap="mr-[6px]" icon={<EasyAcc />} label="轻松访问" after={<Caret className="fill-[#222] ml-[6px]" />} />
        </div>
      </RGroup>
      <RGroup w="w-[152px]" label="打开">
        <Big w="w-[58px]" icon={<PropBig />} lines={["属性"]} arrow="fill-[#222]" />
        <div className="pt-[2px]">
          <Small muted row="h-[29px]" cell="w-[18px]" gap="mr-[5px]" icon={<OpenSm />} label="打开" after={<Caret className="fill-[#c4c4c4] ml-[8px]" />} />
          <Small muted row="h-[29px]" cell="w-[18px]" gap="mr-[5px]" icon={<EditSm />} label="编辑" />
          <Small row="h-[29px]" cell="w-[18px]" gap="mr-[5px]" icon={<HistSm />} label="历史记录" />
        </div>
      </RGroup>
      <RGroup w="w-[102px]" label="选择">
        <div className="pl-[8px]">
          <Small row="h-[26px]" cell="w-[18px]" gap="mr-[4px]" icon={<SelAll />} label="全部选择" />
          <Small row="h-[26px]" cell="w-[18px]" gap="mr-[4px]" icon={<SelNone />} label="全部取消" />
          <Small row="h-[26px]" cell="w-[18px]" gap="mr-[4px]" icon={<SelInv />} label="反向选择" />
        </div>
      </RGroup>
    </div>
    {/* address */}
    <div className="h-[66px] shrink-0 flex items-center pb-[1px]">
      <div className="w-[172px] shrink-0 h-full flex items-center">
        <div className="ml-[18px] w-[16px] flex justify-center"><svg width="16" height="14" viewBox="0 0 16 14" fill="none" stroke="#6b6b6b" strokeWidth="1.300"><path d="M15 7H1M7 1 1 7l6 6" /></svg></div>
        <div className="ml-[30px] w-[16px] flex justify-center"><svg width="16" height="14" viewBox="0 0 16 14" fill="none" stroke="#b2b2b2" strokeWidth="1.300"><path d="M1 7h14M9 1l6 6-6 6" /></svg></div>
        <div className="ml-[25px] flex"><svg width="9" height="6" viewBox="0 0 9 6" fill="none" stroke="#6b6b6b" strokeWidth="1.100"><path d="M.5.500l4 4 4-4" /></svg></div>
        <div className="ml-[23px] flex"><svg width="15" height="17" viewBox="0 0 15 17" fill="none" stroke="#666" strokeWidth="1.300"><path d="M7.500 17V1M1 7.500l6.500-6.500L14 7.500" /></svg></div>
      </div>
      <div className="w-[559px] h-[43px] shrink-0 border border-[#d9d9d9] flex items-center pl-[11px] text-[15px] whitespace-nowrap">
        <Folder />
        <div className="w-[26px] flex justify-center"><ChevR className="stroke-[#666]" /></div>
        <span>此电脑</span>
        <div className="w-[26px] flex justify-center"><ChevR className="stroke-[#666]" /></div>
        <span>Data (E:)</span>
        <div className="w-[28px] flex justify-center"><ChevR className="stroke-[#666]" /></div>
        <span>转换</span>
        <div className="w-[27px] flex justify-center"><ChevR className="stroke-[#666]" /></div>
        <span>TIF 文件</span>
        <div className="flex-1" />
        <ChevD className="stroke-[#555] mr-[28px]" />
        <svg width="17" height="17" viewBox="0 0 17 17" fill="none" stroke="#777" strokeWidth="1.200" className="mr-[13px]"><path d="M14.500 4.500A7 7 0 1 0 15.500 8.500" /><path d="M15 .5v4.500h-4.500" /></svg>
      </div>
      <div className="ml-[13px] flex-1 h-[43px] -mr-[10px] border border-[#d9d9d9] flex items-center pl-[18px] text-[15px] text-[#777]">
        <svg width="16" height="16" viewBox="0 0 16 16" fill="none" stroke="#777" strokeWidth="1.100"><circle cx="10" cy="6" r="5" /><path d="M6.500 9.500 1 15" /></svg>
        <span className="ml-[14px]">在 转换 中搜索</span>
      </div>
    </div>
    {/* body */}
    <div className="h-[430px] shrink-0 flex overflow-hidden relative">
      <div className="w-[245px] shrink-0 flex flex-col gap-[4px] pl-[3px]">
        <NavRow lv="pl-[2px]" icon={<Star />} label="快速访问" />
        <NavRow lv="pl-[2px]" top="mt-[8px]" open icon={<Desk />} label="桌面" />
        <NavRow lv="pl-[12px]" icon={<Cloud />} label="OneDrive - Personal" />
        <NavRow lv="pl-[12px]" icon={<Baidu />} label="百度网盘同步空间" />
        <NavRow lv="pl-[12px]" icon={<Folder />} label="Lisme ." />
        <NavRow lv="pl-[12px]" active icon={<Monitor />} label="此电脑" />
        <NavRow lv="pl-[12px]" open icon={<LibF />} label="库" />
        <NavRow lv="pl-[22px]" icon={<Pic />} label="保存的图片" />
        <NavRow lv="pl-[22px]" icon={<Pic />} label="本机照片" />
        <NavRow lv="pl-[22px]" icon={<Vid />} label="视频" />
        <NavRow lv="pl-[22px]" icon={<Pic />} label="图片" />
        <NavRow lv="pl-[22px]" icon={<DocBlue />} label="文档" />
        <NavRow lv="pl-[22px]" icon={<Music />} label="音乐" />
        <NavRow lv="pl-[12px]" noChev icon={<svg width="16" height="16" viewBox="0 0 16 16"><circle cx="8" cy="8" r="7" fill="#9fbcd4" /></svg>} label="" />
      </div>
      <div className="w-[20px] shrink-0 bg-[#f0f0f0] flex justify-center pl-px pt-[21px]">
        <div className="w-[6px] h-[152px] bg-[#8c8c8c]" />
      </div>
      <div className="w-[2px] shrink-0" />
      <div className="w-px shrink-0 bg-[#f0f0f0]" />
      <div className="flex-1 min-w-0 flex flex-col">
        <div className="h-[35px] shrink-0 ml-[20px] grid grid-cols-[321px_180px_131px_19px_101px] w-[752px] text-[15px] text-[#4c607a] relative">
          <div className="pl-[19px] flex items-center border-r border-[#e6e6e6] mb-[3px]">名称</div>
          <div className="pl-[9px] flex items-center border-r border-[#e6e6e6] mb-[3px]">修改日期</div>
          <div className="pl-[8px] flex items-center border-r border-[#e6e6e6] mb-[3px]">类型</div>
          <div className="flex items-center justify-center border-r border-[#e6e6e6] mb-[3px]"><svg width="11" height="9" viewBox="0 0 11 9" fill="none" stroke="#222" strokeWidth="1.300"><path d="M1 4.500 4 8l6-7" /></svg></div>
          <div className="pl-[7px] flex items-center border-r border-[#e6e6e6] mb-[3px]">大小</div>
          <svg width="9" height="5" viewBox="0 0 9 5" fill="none" stroke="#777" className="absolute left-[163px] top-[1px]"><path d="M.5 4.500l4-4 4 4" /></svg>
        </div>
        <div className="ml-[20px] pt-[5px] flex flex-col gap-[6px] w-[746px]">
          {files.map(([n, s], i) => (
            <div key={n} className={`h-[35px] pt-[2px] shrink-0 grid grid-cols-[321px_180px_131px_114px] items-center text-[15px] text-[#6a6a6a] whitespace-nowrap border ${i === 0 ? "border-[#99d1ff]" : "border-transparent"} ${i === 2 ? "bg-[#e5f3ff]" : ""}`}>
              <div className="pl-[5px] flex items-center text-[#1a1a1a] text-[15.600px]"><Tif /><span className="ml-[6px]">{n}</span></div>
              <div className="pl-[7px] text-[15.700px]">2017-04-01 9:53</div>
              <div className="pl-[7px]">TIF 文件</div>
              <div className="pr-[3px] text-right">{s}</div>
            </div>
          ))}
        </div>
      </div>
      <div className="absolute left-[444px] top-[159px] w-[153px] h-[64px] bg-[#f8f8f8] border border-[#d0d0d0] rounded-[2px] shadow-[3px_3px_4px_rgba(0,0,0,0.4)] pl-[4px] flex flex-col justify-center text-[15px] leading-[19.5px] text-[#4d4d4d] whitespace-nowrap">
        <div>项目类型: TIF 文件</div>
        <div>分辨率: 2000 x 2000</div>
        <div>大小: 12.4 MB</div>
      </div>
    </div>
    {/* status */}
    <div className="flex-1 flex items-center relative">
      <span className="ml-[18px] text-[15px] text-[#3a4a60]">59 个项目</span>
      <div className="ml-[13px] w-px h-[14px] bg-[#e6e6e6]" />
      <div className="flex-1" />
      <div className="w-[27px] h-full bg-[#e5f1fb] border border-[#3ca4e4] flex items-center justify-center">
        <svg width="14" height="14" viewBox="0 0 14 14" stroke="#111"><path d="M0 1.500h14M0 5.500h14M0 9.500h14M0 13.500h14" /></svg>
      </div>
    </div>
  </div>
);

export default function App() {
  return (
    <div className="relative w-[1761px] h-[765px] overflow-hidden bg-[linear-gradient(90deg,#2a2024,#2c2226_25%,#1f1a1d_55%,#1a1719)] font-['Noto_Sans','Noto_Sans_CJK_SC',sans-serif]">
      <div className="h-[10px] bg-[#7d8f93]" />
      <ArcMap />
      <div className="h-[2px] w-[1470px] bg-[#4a3a28]" />
      <div className="absolute left-[1548px] top-[709px] w-[2px] h-[56px] bg-[#d9922e]" />
      <div className="absolute left-[1553px] top-[709px] w-[26px] h-[56px] bg-[#24355c]" />
      <div className="absolute left-[1673px] top-[752px] w-[20px] h-[6px] bg-[#e9b23c] rounded-t-[3px]" />
      <div className="absolute left-[1673px] top-[757px] w-[53px] h-[8px] bg-[#f2c75c] rounded-t-[2px]" />
      <div className="absolute left-[1649px] top-[739px] text-[13px] leading-[20px] text-[#dcdcdc] whitespace-nowrap font-['Liberation_Sans','Noto_Sans_CJK_SC',sans-serif]">CSDN @Lisme丶</div>
      <Explorer />
    </div>
  );
}
